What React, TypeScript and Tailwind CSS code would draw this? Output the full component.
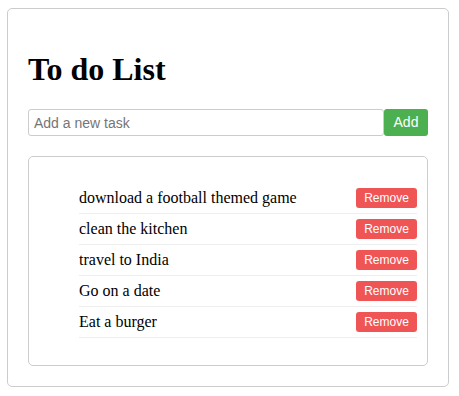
import React from "react";

const tasks = [
  "download a football themed game",
  "clean the kitchen",
  "travel to India",
  "Go on a date",
  "Eat a burger",
];

export default function App() {
  return (
    <div className="bg-white min-h-[396px] pt-[8px] pl-[7px]">
      <div className="w-[442px] border border-[#cccccc] rounded-[5px] p-[20px]">
        <h1
          className="text-[32px] font-bold text-black my-[21px] leading-[38px]"
          style={{ fontFamily: '"Liberation Serif", "Times New Roman", serif' }}
        >
          To do List
        </h1>
        <div className="flex" style={{ fontFamily: '"Liberation Sans", Arial, sans-serif' }}>
          <input
            className="flex-1 h-[27px] border border-[#cccccc] rounded-[3px] px-[5px] text-[14px] text-black placeholder:text-[#757575] outline-none"
            placeholder="Add a new task"
          />
          <button className="h-[27px] w-[44px] bg-[#4caf50] text-white text-[14px] rounded-[3px]">
            Add
          </button>
        </div>
        <div className="mt-[20px] border border-[#cccccc] rounded-[5px] px-[10px] pt-[10px] pb-[11px]">
          <ul className="my-[16px] pl-[40px]">
            {tasks.map((t) => (
              <li
                key={t}
                className="flex items-center justify-between h-[31px] border-b border-[#eeeeee]"
              >
                <span
                  className="text-[16px] text-black"
                  style={{ fontFamily: '"Liberation Serif", "Times New Roman", serif' }}
                >
                  {t}
                </span>
                <button
                  className="h-[20px] w-[61px] bg-[#f05555] text-white text-[12px] rounded-[3px]"
                  style={{ fontFamily: '"Liberation Sans", Arial, sans-serif' }}
                >
                  Remove
                </button>
              </li>
            ))}
          </ul>
        </div>
      </div>
    </div>
  );
}
